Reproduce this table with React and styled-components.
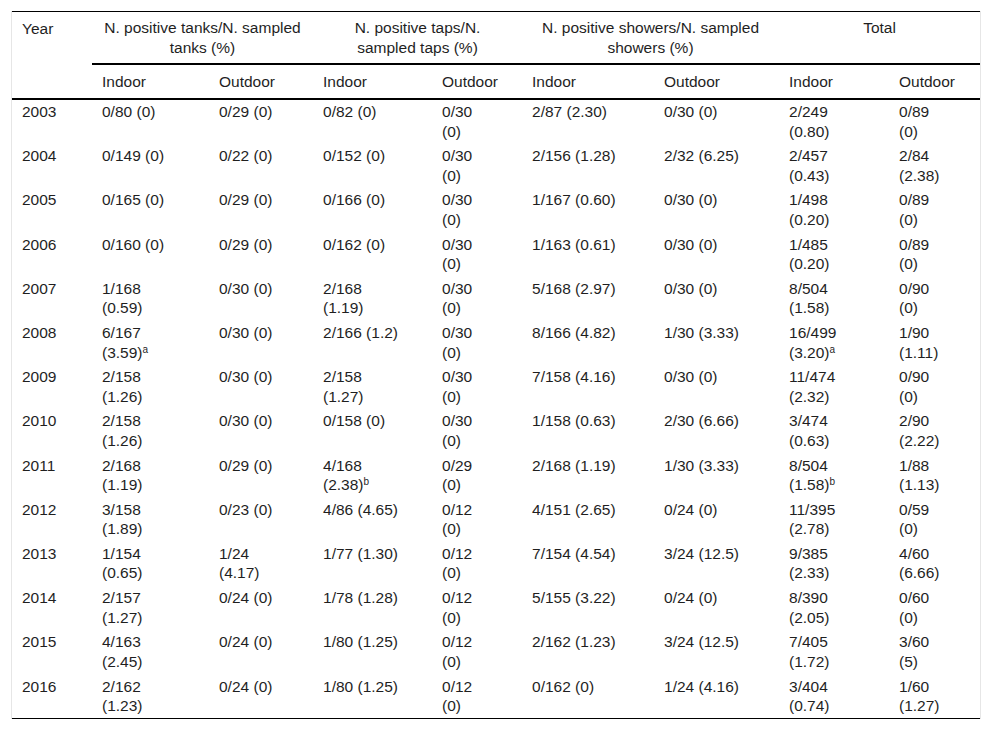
import styled, { createGlobalStyle } from 'styled-components';

const GlobalStyle = createGlobalStyle`
  html, body {
    margin: 0;
    padding: 0;
    background: #fff;
  }
  body {
    font-family: "Liberation Sans", Arial, sans-serif;
    color: #1f1f1f;
  }
`;

const Frame = styled.div`
  width: 970px;
  box-sizing: border-box;
  margin: 11px 0 0 11px;
  border-left: 1px solid #e6e6e6;
  border-right: 1px solid #e6e6e6;
`;

const Table = styled.table`
  width: 968px;
  border-collapse: collapse;
  table-layout: fixed;
  font-size: 15.5px;
  line-height: 19.5px;
  border-top: 1px solid #000;
  border-bottom: 1px solid #000;
`;

const HeadCell = styled.th`
  font-weight: normal;
  text-align: ${p => (p.$center ? 'center' : 'left')};
  vertical-align: top;
  padding: ${p => (p.$rule ? '6px 10px 6px' : '7px 10px 6px')};
  white-space: pre;
  border-bottom: ${p => (p.$rule ? '2px solid #000' : 'none')};
`;

const Head = styled.thead`
  border-bottom: 2px solid #000;
`;

const Cell = styled.td`
  vertical-align: top;
  padding: 2.6px 10px;
  white-space: pre-line;
  text-align: left;
`;

const Sup = styled.sup`
  font-size: 10px;
  line-height: 0;
  vertical-align: 5px;
`;

const widths = [80, 117, 104, 119, 90, 132, 125, 110, 91];

const groups = [
  'N. positive tanks/N. sampled\ntanks (%)',
  'N. positive taps/N.\nsampled taps (%)',
  'N. positive showers/N. sampled\nshowers (%)',
  'Total',
];

const rows = [
  ['2003', '0/80 (0)', '0/29 (0)', '0/82 (0)', '0/30\n(0)', '2/87 (2.30)', '0/30 (0)', '2/249\n(0.80)', '0/89\n(0)'],
  ['2004', '0/149 (0)', '0/22 (0)', '0/152 (0)', '0/30\n(0)', '2/156 (1.28)', '2/32 (6.25)', '2/457\n(0.43)', '2/84\n(2.38)'],
  ['2005', '0/165 (0)', '0/29 (0)', '0/166 (0)', '0/30\n(0)', '1/167 (0.60)', '0/30 (0)', '1/498\n(0.20)', '0/89\n(0)'],
  ['2006', '0/160 (0)', '0/29 (0)', '0/162 (0)', '0/30\n(0)', '1/163 (0.61)', '0/30 (0)', '1/485\n(0.20)', '0/89\n(0)'],
  ['2007', '1/168\n(0.59)', '0/30 (0)', '2/168\n(1.19)', '0/30\n(0)', '5/168 (2.97)', '0/30 (0)', '8/504\n(1.58)', '0/90\n(0)'],
  ['2008', '6/167\n(3.59)^a', '0/30 (0)', '2/166 (1.2)', '0/30\n(0)', '8/166 (4.82)', '1/30 (3.33)', '16/499\n(3.20)^a', '1/90\n(1.11)'],
  ['2009', '2/158\n(1.26)', '0/30 (0)', '2/158\n(1.27)', '0/30\n(0)', '7/158 (4.16)', '0/30 (0)', '11/474\n(2.32)', '0/90\n(0)'],
  ['2010', '2/158\n(1.26)', '0/30 (0)', '0/158 (0)', '0/30\n(0)', '1/158 (0.63)', '2/30 (6.66)', '3/474\n(0.63)', '2/90\n(2.22)'],
  ['2011', '2/168\n(1.19)', '0/29 (0)', '4/168\n(2.38)^b', '0/29\n(0)', '2/168 (1.19)', '1/30 (3.33)', '8/504\n(1.58)^b', '1/88\n(1.13)'],
  ['2012', '3/158\n(1.89)', '0/23 (0)', '4/86 (4.65)', '0/12\n(0)', '4/151 (2.65)', '0/24 (0)', '11/395\n(2.78)', '0/59\n(0)'],
  ['2013', '1/154\n(0.65)', '1/24\n(4.17)', '1/77 (1.30)', '0/12\n(0)', '7/154 (4.54)', '3/24 (12.5)', '9/385\n(2.33)', '4/60\n(6.66)'],
  ['2014', '2/157\n(1.27)', '0/24 (0)', '1/78 (1.28)', '0/12\n(0)', '5/155 (3.22)', '0/24 (0)', '8/390\n(2.05)', '0/60\n(0)'],
  ['2015', '4/163\n(2.45)', '0/24 (0)', '1/80 (1.25)', '0/12\n(0)', '2/162 (1.23)', '3/24 (12.5)', '7/405\n(1.72)', '3/60\n(5)'],
  ['2016', '2/162\n(1.23)', '0/24 (0)', '1/80 (1.25)', '0/12\n(0)', '0/162 (0)', '1/24 (4.16)', '3/404\n(0.74)', '1/60\n(1.27)'],
];

// "(3.59)^a" -> text with a superscript note
const renderValue = (value) => {
  const [text, note] = value.split('^');
  return (
    <>
      {text}
      {note && <Sup>{note}</Sup>}
    </>
  );
};

export default function App() {
  return (
    <>
      <GlobalStyle />
      <Frame>
        <Table>
          <colgroup>
            {widths.map((w, i) => (
              <col key={i} style={{ width: w }} />
            ))}
          </colgroup>
          <Head>
            <tr>
              <HeadCell rowSpan={2}>Year</HeadCell>
              {groups.map((g) => (
                <HeadCell key={g} colSpan={2} $center $rule>
                  {g}
                </HeadCell>
              ))}
            </tr>
            <tr>
              {groups.map((g) => [
                <HeadCell key={g + 'in'}>Indoor</HeadCell>,
                <HeadCell key={g + 'out'}>Outdoor</HeadCell>,
              ])}
            </tr>
          </Head>
          <tbody>
            {rows.map((row) => (
              <tr key={row[0]}>
                {row.map((v, i) => (
                  <Cell key={i}>{renderValue(v)}</Cell>
                ))}
              </tr>
            ))}
          </tbody>
        </Table>
      </Frame>
    </>
  );
}
